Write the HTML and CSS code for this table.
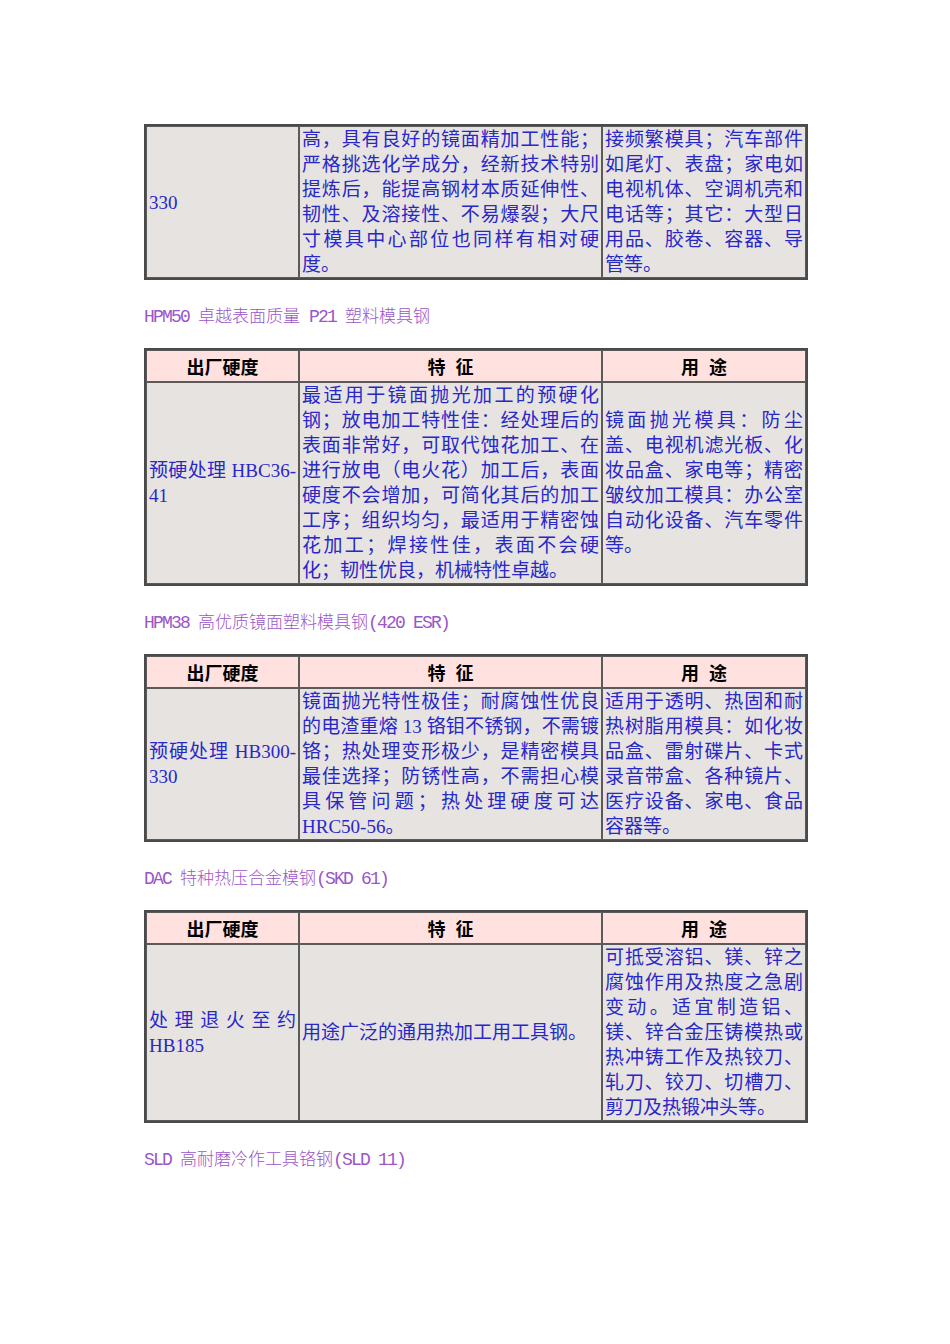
FILE: index.html
```html
<!DOCTYPE html>
<html lang="zh-CN">
<head>
<meta charset="utf-8">
<title>模具钢</title>
<link rel="stylesheet" href="styles.css">
</head>
<body>
<div class="page">
  <table class="spec">
    <colgroup><col class="c1"><col class="c2"><col class="c3"></colgroup>
    <tr>
      <td>330</td>
      <td>高，具有良好的镜面精加工性能；严格挑选化学成分，经新技术特别提炼后，能提高钢材本质延伸性、韧性、及溶接性、不易爆裂；大尺寸模具中心部位也同样有相对硬度。</td>
      <td>接频繁模具；汽车部件如尾灯、表盘；家电如电视机体、空调机壳和电话等；其它：大型日用品、胶卷、容器、导管等。</td>
    </tr>
  </table>

  <p class="title"><span class="en">HPM50 </span>卓越表面质量<span class="en"> P21 </span>塑料模具钢</p>

  <table class="spec">
    <colgroup><col class="c1"><col class="c2"><col class="c3"></colgroup>
    <tr class="head"><th>出厂硬度</th><th>特<span class="gap"></span>征</th><th>用<span class="gap"></span>途</th></tr>
    <tr>
      <td>预硬处理 HBC36-41</td>
      <td>最适用于镜面抛光加工的预硬化钢；放电加工特性佳：经处理后的表面非常好，可取代蚀花加工、在进行放电（电火花）加工后，表面硬度不会增加，可简化其后的加工工序；组织均匀，最适用于精密蚀花加工；焊接性佳，表面不会硬化；韧性优良，机械特性卓越。</td>
      <td>镜面抛光模具：防尘盖、电视机滤光板、化妆品盒、家电等；精密皱纹加工模具：办公室自动化设备、汽车零件等。</td>
    </tr>
  </table>

  <p class="title"><span class="en">HPM38 </span>高优质镜面塑料模具钢<span class="en">(420 ESR)</span></p>

  <table class="spec">
    <colgroup><col class="c1"><col class="c2"><col class="c3"></colgroup>
    <tr class="head"><th>出厂硬度</th><th>特<span class="gap"></span>征</th><th>用<span class="gap"></span>途</th></tr>
    <tr>
      <td>预硬处理 HB300-330</td>
      <td>镜面抛光特性极佳；耐腐蚀性优良的电渣重熔 13 铬钼不锈钢，不需镀铬；热处理变形极少，是精密模具最佳选择；防锈性高，不需担心模具保管问题；热处理硬度可达 HRC50-56。</td>
      <td>适用于透明、热固和耐热树脂用模具：如化妆品盒、雷射碟片、卡式录音带盒、各种镜片、医疗设备、家电、食品容器等。</td>
    </tr>
  </table>

  <p class="title"><span class="en">DAC </span>特种热压合金模钢<span class="en">(SKD 61)</span></p>

  <table class="spec">
    <colgroup><col class="c1"><col class="c2"><col class="c3"></colgroup>
    <tr class="head"><th>出厂硬度</th><th>特<span class="gap"></span>征</th><th>用<span class="gap"></span>途</th></tr>
    <tr>
      <td>处理退火至约 HB185</td>
      <td>用途广泛的通用热加工用工具钢。</td>
      <td>可抵受溶铝、镁、锌之腐蚀作用及热度之急剧变动。适宜制造铝、镁、锌合金压铸模热或热冲铸工作及热铰刀、轧刀、铰刀、切槽刀、剪刀及热锻冲头等。</td>
    </tr>
  </table>

  <p class="title"><span class="en">SLD </span>高耐磨冷作工具铬钢<span class="en">(SLD 11)</span></p>
</div>
</body>
</html>
```
FILE: styles.css
```css
html, body {
  margin: 0;
  padding: 0;
  background: #ffffff;
}

.page {
  padding: 124px 0 120px 144px;
  font-family: "Liberation Serif", "Noto Sans CJK SC", serif;
}

.spec {
  width: 664px;
  table-layout: fixed;
  border-collapse: separate;
  border-spacing: 0;
  border: 2px solid #4a4a4a;
  background: #e7e3e0;
}

.spec .c1 { width: 153px; }
.spec .c2 { width: 303px; }
.spec .c3 { width: 204px; }

.spec td {
  border: 1px solid #5a5a5a;
  padding: 0 2px;
  font-size: 19px;
  line-height: 25px;
  color: #2828c8;
  text-align: justify;
  vertical-align: middle;
}

.spec th {
  border: 1px solid #5a5a5a;
  padding: 3px 2px 2px;
  background: #ffe2e0;
  color: #000000;
  font-family: "Noto Sans CJK SC", sans-serif;
  font-weight: bold;
  font-size: 18px;
  line-height: 25px;
  text-align: center;
}

.spec th .gap {
  display: inline-block;
  width: 10px;
}

.title {
  margin: 22px 0 18px;
  font-family: "Noto Sans CJK SC", sans-serif;
  font-weight: 300;
  font-size: 17px;
  line-height: 25px;
  color: #9b55c8;
}

.title .en {
  font-family: "Liberation Mono", monospace;
  font-size: 18px;
  letter-spacing: -1.8px;
  white-space: pre;
}
```
